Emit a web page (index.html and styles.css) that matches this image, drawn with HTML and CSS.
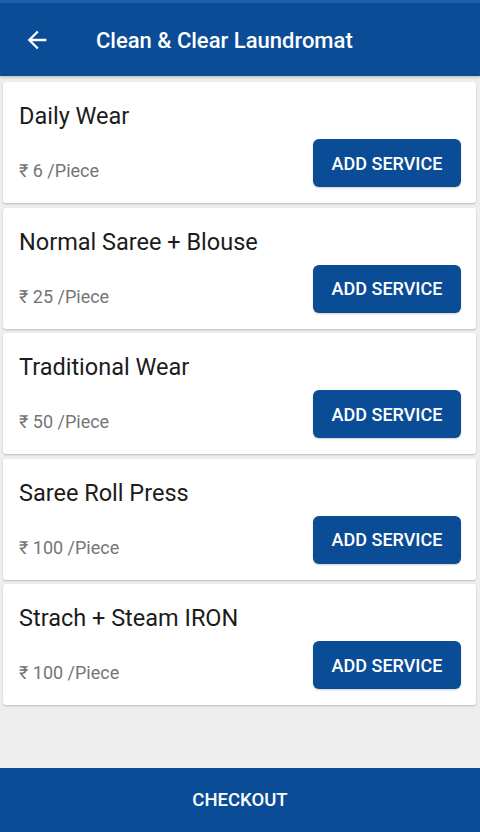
FILE: index.html
```html
<!DOCTYPE html>
<html lang="en">
<head>
  <meta charset="UTF-8">
  <meta name="viewport" content="width=device-width, initial-scale=1.0">
  <title>Clean &amp; Clear Laundromat</title>
  <link rel="stylesheet" href="styles.css">
</head>
<body>
  <div class="app">
    <header class="topbar">
      <button class="back" aria-label="Back">
        <svg width="28" height="28" viewBox="0 0 24 24"><path d="M20 11H7.83l5.59-5.59L12 4l-8 8 8 8 1.41-1.41L7.83 13H20v-2z" fill="#fff"/></svg>
      </button>
      <h1>Clean &amp; Clear Laundromat</h1>
    </header>

    <main class="services">
      <div class="card">
        <div class="info">
          <div class="name">Daily Wear</div>
          <div class="price">₹ 6 /Piece</div>
        </div>
        <button class="add">ADD SERVICE</button>
      </div>
      <div class="card">
        <div class="info">
          <div class="name">Normal Saree + Blouse</div>
          <div class="price">₹ 25 /Piece</div>
        </div>
        <button class="add">ADD SERVICE</button>
      </div>
      <div class="card">
        <div class="info">
          <div class="name">Traditional Wear</div>
          <div class="price">₹ 50 /Piece</div>
        </div>
        <button class="add">ADD SERVICE</button>
      </div>
      <div class="card">
        <div class="info">
          <div class="name">Saree Roll Press</div>
          <div class="price">₹ 100 /Piece</div>
        </div>
        <button class="add">ADD SERVICE</button>
      </div>
      <div class="card">
        <div class="info">
          <div class="name">Strach + Steam IRON</div>
          <div class="price">₹ 100 /Piece</div>
        </div>
        <button class="add">ADD SERVICE</button>
      </div>
    </main>

    <button class="checkout">CHECKOUT</button>
  </div>
</body>
</html>
```

FILE: styles.css
```css
body {
  margin: 0;
  font-family: Roboto, "Noto Sans", sans-serif;
  background-color: #eeeeee;
  color: #212121;
}

.app {
  height: 832px;
  display: flex;
  flex-direction: column;
}

.topbar {
  height: 73px;
  background-color: #0b4c97;
  border-top: 3px solid #1e5fa8;
  display: flex;
  align-items: center;
  box-shadow: 0 1px 3px rgba(0, 0, 0, 0.25);
}

.back {
  background: none;
  border: none;
  padding: 0;
  margin-left: 23px;
  width: 28px;
  height: 28px;
  display: flex;
}

.topbar h1 {
  margin: 2px 0 0 45px;
  color: #fff;
  font-size: 22px;
  font-weight: 500;
}

.services {
  flex: 1;
  padding: 6px 4px 0 3px;
  display: flex;
  flex-direction: column;
  gap: 4.5px;
}

.card {
  height: 121px;
  background: #fff;
  border-radius: 3px;
  box-shadow: 0 1px 2px rgba(0, 0, 0, 0.22);
  display: flex;
  align-items: flex-end;
  justify-content: space-between;
  padding: 0 15px 16px 16px;
  box-sizing: border-box;
}

.info {
  align-self: stretch;
  display: flex;
  flex-direction: column;
  justify-content: space-between;
  padding: 20px 0 0;
}

.name {
  font-size: 23.5px;
  color: #1c1c1c;
}

.price {
  font-size: 18px;
  color: #757575;
  padding-bottom: 6px;
}

.add {
  width: 148px;
  height: 48px;
  background-color: #0b4c97;
  color: #fff;
  border: none;
  border-radius: 6px;
  font-family: Roboto, sans-serif;
  font-size: 18px;
  font-weight: 500;
  box-shadow: 0 1px 2px rgba(0, 0, 0, 0.2);
}

.checkout {
  height: 64px;
  border: none;
  background-color: #0b4c97;
  color: #fff;
  font-family: Roboto, sans-serif;
  font-size: 18.5px;
  font-weight: 500;
  width: 100%;
}
```
